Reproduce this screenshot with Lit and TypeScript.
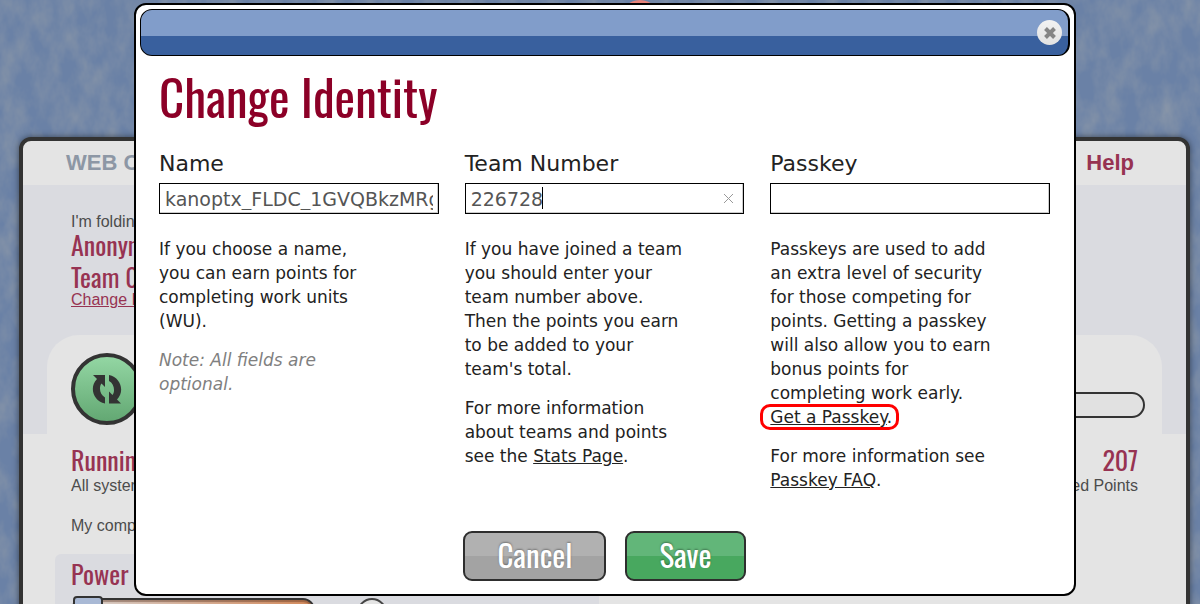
import { LitElement, html, css, svg } from "lit";
import { customElement, property, state } from "lit/decorators.js";

const refreshIcon = svg`
  <path d="M1 2 L13 2 L13 14 L9.500 10.500 C6.500 14.500 8 22 13 24.500 L13 30.500 C1 28 -3 14 5 6 Z"/>
  <path d="M29 30.500 L17 30.500 L17 18.500 L20.500 22 C23.500 18 22 10.500 17 8 L17 2 C29 4.500 33 18.500 25 26.500 Z"/>`;

@customElement("status-panel")
export class StatusPanel extends LitElement {
  static styles = css`
    :host {
      display: block;
      font: 16px/20px "Liberation Sans", Arial, sans-serif;
      color: #4c4c4c;
    }
    .panel {
      min-height: 600px;
      border: 4px solid #333;
      border-radius: 12px;
      overflow: hidden;
      background: #e4e4e4;
      box-shadow: 0 0 6px rgba(0, 0, 0, 0.5);
    }
    header {
      display: flex;
      justify-content: space-between;
      padding: 9px 52px 9px 43px;
      font-size: 22px;
      line-height: 26px;
      font-weight: bold;
      color: #8d97a5;
    }
    a {
      color: #973352;
    }
    header a {
      text-decoration: none;
    }
    .identity {
      background: #dadbe0;
      padding-top: 27px;
    }
    .who {
      display: flex;
      flex-direction: column;
      align-items: flex-start;
      padding: 0 48px 28px;
    }
    h2,
    .points b {
      margin: 0;
      font: 400 26px/32px Oswald, "Liberation Sans Narrow", sans-serif;
      color: #973352;
    }
    .who h2 {
      margin-top: -3px;
      margin-bottom: 3px;
    }
    .who a {
      margin-top: -3px;
      line-height: 14px;
    }
    .progress-tab {
      display: flex;
      align-items: center;
      justify-content: space-between;
      margin: 0 24px;
      padding: 18px 17px 9px 24px;
      border-radius: 32px 32px 0 0;
      background: #e4e4e4;
    }
    .state {
      width: 72px;
      height: 72px;
      padding: 0;
      display: grid;
      place-items: center;
      border: 4px solid #333;
      border-radius: 50%;
      background: linear-gradient(#93d6a3, #63a873);
    }
    .state svg {
      width: 30px;
      height: 33px;
      fill: #333;
    }
    .bar {
      width: 440px;
      height: 26px;
      box-sizing: border-box;
      margin-top: 32px;
      border: 2px solid #333;
      border-radius: 13px;
      background: #e1e1e1;
    }
    .row {
      display: flex;
      justify-content: space-between;
      padding: 10px 48px 0;
    }
    .row p {
      margin: 0;
    }
    .points {
      display: flex;
      flex-direction: column;
      align-items: flex-end;
    }
    .where {
      margin: 0;
      padding: 20px 48px 18px;
    }
    .power {
      width: 544px;
      box-sizing: border-box;
      margin-left: 32px;
      padding: 2px 16px 40px;
      border-radius: 6px;
      background: #dadbe0;
    }
    .power h2 {
      line-height: 36px;
    }
    .controls {
      display: flex;
      align-items: flex-start;
      gap: 42px;
      padding-top: 4px;
    }
    input {
      appearance: none;
      width: 244px;
      height: 30px;
      margin: 0;
      background: none;
    }
    input::-webkit-slider-runnable-track {
      height: 26px;
      box-sizing: border-box;
      border: 2px solid #333;
      border-radius: 12px;
      background: linear-gradient(90deg, #d9d4d2, #d38a5c);
      box-shadow: inset 0 2px 1px rgba(80, 40, 20, 0.4);
    }
    input::-webkit-slider-thumb {
      appearance: none;
      box-sizing: border-box;
      width: 30px;
      height: 30px;
      margin-top: -4px;
      border: 2px solid #333;
      border-radius: 4px;
      background: #a9b9d5;
    }
    .dial {
      width: 30px;
      height: 30px;
      box-sizing: border-box;
      margin-top: 2px;
      border: 2px solid #444;
      border-radius: 50%;
      background: #e4e4e4;
    }
  `;

  render() {
    return html`
      <section class="panel">
        <header><span>WEB CONTROL</span><a href="#help">Help</a></header>
        <div class="identity">
          <div class="who">
            <span>I'm folding as</span>
            <h2>Anonymous</h2>
            <h2>Team 0</h2>
            <a href="#identity">Change Identity</a>
          </div>
          <div class="progress-tab">
            <button class="state" aria-label="Folding status">
              <svg viewBox="0 0 30 33">${refreshIcon}</svg>
            </button>
            <div class="bar" role="progressbar" aria-label="Work unit progress"></div>
          </div>
        </div>
        <div class="row">
          <div><h2>Running</h2><p>All systems are go</p></div>
          <div class="points"><b>207</b><span>Estimated Points</span></div>
        </div>
        <p class="where">My computer is on</p>
        <section class="power">
          <h2><label for="power">Power</label></h2>
          <div class="controls">
            <input id="power" type="range" min="0" max="2" value="0" />
            <span class="dial"></span>
          </div>
        </section>
      </section>
    `;
  }
}

@customElement("identity-dialog")
export class IdentityDialog extends LitElement {
  @property() name = "kanoptx_FLDC_1GVQBkzMRgwxSdPhY";
  @state() private team = "226728";

  static styles = css`
    :host {
      display: block;
      width: 100%;
      max-width: 942px;
      font: 17px/24px "DejaVu Sans", Verdana, sans-serif;
      color: #222;
    }
    .dialog {
      border: 2px solid #000;
      border-radius: 12px;
      padding: 4px;
      background: #fff;
    }
    .titlebar {
      display: flex;
      justify-content: flex-end;
      align-items: center;
      height: 47px;
      box-sizing: border-box;
      padding: 0 6px;
      border: 1px solid #000;
      border-right-width: 2px;
      border-radius: 12px;
      background: linear-gradient(#819dca 0 26px, #39609e 26px);
    }
    .close {
      width: 25px;
      height: 25px;
      padding: 0;
      border: 0;
      border-radius: 50%;
      background: linear-gradient(#f2f2f2, #e2e2e2);
    }
    .close svg {
      display: block;
      width: 25px;
      height: 25px;
      stroke: #858585;
      stroke-width: 4;
      fill: none;
    }
    form {
      padding: 8px 20px 9px 19px;
    }
    h1 {
      margin: 0 0 22px;
      font: 400 49px/64px Oswald, "Liberation Sans Narrow", sans-serif;
      color: #8c0027;
    }
    .columns {
      display: grid;
      grid-template-columns: repeat(3, 1fr);
      gap: 26px;
      min-height: 381px;
    }
    label {
      display: block;
      margin-bottom: 5px;
      font-size: 22px;
      line-height: 28px;
    }
    .field {
      position: relative;
    }
    input {
      display: block;
      width: 100%;
      height: 31px;
      box-sizing: border-box;
      padding: 0 5px;
      border: 1px solid #000;
      border-radius: 0;
      outline: 0;
      background: #fff;
      box-shadow: inset -1px -1px #ccc;
      font: 19px "DejaVu Sans", Verdana, sans-serif;
      color: #555;
    }
    .caret {
      position: absolute;
      top: 4px;
      left: 77px;
      width: 1px;
      height: 22px;
      background: #000;
    }
    .clear {
      position: absolute;
      top: 10px;
      right: 10px;
      width: 11px;
      height: 11px;
      padding: 0;
      border: 0;
      background: none;
    }
    .clear svg {
      display: block;
      stroke: #999;
      fill: none;
    }
    .help {
      padding: 23px 56px 0 0;
    }
    p {
      margin: 0 0 15px;
    }
    .note {
      font-style: italic;
      color: #808080;
    }
    p a {
      color: inherit;
      text-underline-offset: 1px;
    }
    .marked {
      position: relative;
    }
    .marked::after {
      content: "";
      position: absolute;
      inset: -3px -7px -3px -10px;
      border: 3px solid #f00;
      border-radius: 10px;
      pointer-events: none;
    }
    .actions {
      display: flex;
      justify-content: center;
      gap: 19px;
    }
    .action {
      height: 50px;
      padding: 0 32px 3px;
      border: 2px solid #2e2e2e;
      border-radius: 9px;
      font: 400 31px/43px Oswald, "Liberation Sans Narrow", sans-serif;
      color: #fff;
      text-shadow: 0 -1px 2px rgba(0, 0, 0, 0.35);
    }
    .cancel {
      background: linear-gradient(#b1b1b1 50%, #a3a3a3 50%);
    }
    .save {
      background: linear-gradient(#62b679 50%, #48a85f 50%);
    }
  `;

  render() {
    return html`
      <div class="dialog" role="dialog" aria-labelledby="title">
        <div class="titlebar">
          <button class="close" aria-label="Close">
            <svg viewBox="0 0 25 25"><path d="M8.500 8.500l9 9M17.500 8.500l-9 9" /></svg>
          </button>
        </div>
        <form @submit=${(e: Event) => e.preventDefault()}>
          <h1 id="title">Change Identity</h1>
          <div class="columns">
            <div>
              <label for="name">Name</label>
              <div class="field"><input id="name" .value=${this.name} /></div>
              <div class="help">
                <p>If you choose a name, you can earn points for completing work units (WU).</p>
                <p class="note">Note: All fields are optional.</p>
              </div>
            </div>
            <div>
              <label for="team">Team Number</label>
              <div class="field">
                <input id="team" .value=${this.team} />
                <span class="caret"></span>
                <button class="clear" type="button" aria-label="Clear" @click=${() => (this.team = "")}>
                  <svg width="11" height="11"><path d="M1 1l9 9M10 1l-9 9" /></svg>
                </button>
              </div>
              <div class="help">
                <p>
                  If you have joined a team you should enter your team number above. Then the
                  points you earn to be added to your team's total.
                </p>
                <p>For more information about teams and points see the <a href="#stats">Stats Page</a>.</p>
              </div>
            </div>
            <div>
              <label for="passkey">Passkey</label>
              <div class="field"><input id="passkey" /></div>
              <div class="help">
                <p>
                  Passkeys are used to add an extra level of security for those competing for
                  points. Getting a passkey will also allow you to earn bonus points for
                  completing work early.
                  <span class="marked"><a href="#passkey">Get a Passkey</a>.</span>
                </p>
                <p>For more information see <a href="#faq">Passkey FAQ</a>.</p>
              </div>
            </div>
          </div>
          <div class="actions">
            <button class="action cancel" type="button">Cancel</button>
            <button class="action save" type="submit">Save</button>
          </div>
        </form>
      </div>
    `;
  }
}

@customElement("app-root")
export class AppRoot extends LitElement {
  static styles = css`
    :host {
      display: block;
      position: relative;
      height: 100vh;
      overflow: hidden;
      background: #6a81a6;
    }
    .texture {
      position: absolute;
      inset: 0;
      width: 100%;
      height: 100%;
    }
    .logo {
      position: absolute;
      top: 0;
      left: 620px;
      width: 40px;
      height: 40px;
      border-radius: 50%;
      background: #e8837a;
    }
    main {
      position: relative;
      padding: 137px 10px 0 19px;
    }
    .overlay {
      position: absolute;
      inset: 0;
      display: flex;
      justify-content: center;
      align-items: flex-start;
      padding: 3px 0 0 10px;
    }
  `;

  render() {
    return html`
      <svg class="texture" aria-hidden="true">
        <filter id="cloud" x="0" y="0" width="100%" height="100%" color-interpolation-filters="sRGB">
          <feTurbulence type="fractalNoise" baseFrequency="0.05 0.03" numOctaves="4" seed="7" />
          <feColorMatrix values="0 0 0 0 0.540  0 0 0 0 0.590  0 0 0 0 0.660  1.500 0 0 0 -0.500" />
        </filter>
        <rect width="100%" height="100%" filter="url(#cloud)" />
      </svg>
      <span class="logo"></span>
      <main><status-panel></status-panel></main>
      <div class="overlay"><identity-dialog></identity-dialog></div>
    `;
  }
}
